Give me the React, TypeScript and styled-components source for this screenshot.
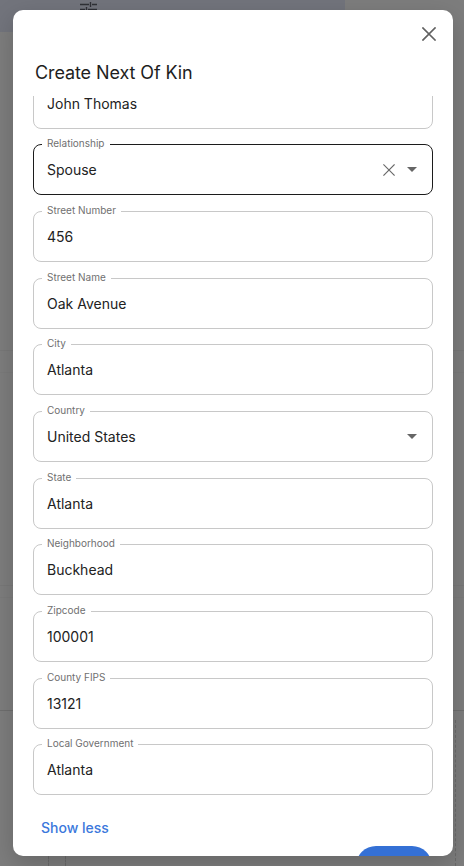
import React from "react";
import styled, { createGlobalStyle } from "styled-components";

const Global = createGlobalStyle`
  html, body { margin: 0; padding: 0; }
  body { font-family: Inter, "Noto Sans", Arial, sans-serif; background: #7d7d7d; }
  * { box-sizing: border-box; }
`;

const Screen = styled.div`
  position: relative;
  width: 464px;
  height: 866px;
  overflow: hidden;
  background: #7d7d7d;
  padding: 10px 11px 0 13px;
`;

const PageBehind = styled.div`
  position: absolute;
  inset: 0;
  display: flex;
  flex-direction: column;
  pointer-events: none;
`;

const TopStrip = styled.div`
  width: 345px;
  height: 32px;
  background: #72747c;
  display: flex;
  align-items: flex-start;
  padding-left: 80px;
  color: #2e2e33;
`;

const FaintRule = styled.div<{ $top: number; $color: string }>`
  position: absolute;
  left: 0;
  right: 0;
  top: ${(p) => p.$top}px;
  height: 1px;
  background: ${(p) => p.$color};
`;

const DashedV = styled.div<{ $left: number; $top: number }>`
  position: absolute;
  left: ${(p) => p.$left}px;
  top: ${(p) => p.$top}px;
  bottom: 0;
  width: 0;
  border-left: 1px dashed #6a6a6a;
`;

const Dialog = styled.div`
  position: relative;
  width: 440px;
  height: 846px;
  background: #fff;
  border-radius: 10px;
  overflow: hidden;
  display: flex;
  flex-direction: column;
  box-shadow: 0 8px 24px rgba(0, 0, 0, 0.18);
`;

const Header = styled.div`
  flex: none;
  height: 86px;
  display: flex;
  flex-direction: column;
  padding: 10px 10px 0 22px;
`;

const CloseRow = styled.div`
  display: flex;
  justify-content: flex-end;
`;

const CloseButton = styled.button`
  width: 28px;
  height: 28px;
  border: none;
  background: transparent;
  padding: 0;
  display: flex;
  align-items: center;
  justify-content: center;
  cursor: pointer;
`;

const Title = styled.h2`
  margin: 12.5px 0 0;
  font-size: 18px;
  line-height: 24px;
  font-weight: 400;
  color: #1e1e1e;
  letter-spacing: -0.1px;
`;

const Body = styled.div`
  flex: 1;
  overflow: hidden;
  padding: 0 20px;
`;

const Stack = styled.div`
  margin-top: -18.33px;
  display: flex;
  flex-direction: column;
  gap: 15.67px;
`;

const Field = styled.div<{ $focused?: boolean }>`
  position: relative;
  height: 51px;
  border: 1px solid ${(p) => (p.$focused ? "#1c1c1c" : "#c8c8c8")};
  border-radius: 8px;
  display: flex;
  align-items: center;
  padding: 0 13px;
`;

const Label = styled.span`
  position: absolute;
  top: -9px;
  left: 8px;
  padding: 0 5px;
  background: #fff;
  font-size: 10px;
  line-height: 14px;
  color: #707070;
`;

const Value = styled.span`
  flex: 1;
  font-size: 14px;
  color: #222;
`;

const Adornments = styled.div`
  display: flex;
  align-items: center;
  gap: 12px;
  margin-right: 2px;
`;

const Footer = styled.div`
  display: flex;
  flex-direction: column;
  padding-top: 24px;
`;

const ShowLess = styled.button`
  align-self: flex-start;
  border: none;
  background: transparent;
  padding: 0 0 0 8px;
  font-family: inherit;
  font-size: 14px;
  line-height: 18px;
  font-weight: 500;
  color: #3b78dc;
  cursor: pointer;
`;

const Actions = styled.div`
  display: flex;
  justify-content: flex-end;
  margin-top: 9px;
  padding-right: 1px;
`;

const PrimaryButton = styled.button`
  width: 76px;
  height: 40px;
  border: none;
  border-radius: 20px;
  background: #3470d5;
`;

const CloseIcon = ({ size, color, width }: { size: number; color: string; width: number }) => (
  <svg width={size} height={size} viewBox="0 0 14 14" fill="none">
    <path d="M1 1L13 13M13 1L1 13" stroke={color} strokeWidth={width} strokeLinecap="square" />
  </svg>
);

const Caret = () => (
  <svg width="10" height="5" viewBox="0 0 10 5">
    <path d="M0 0H10L5 5Z" fill="#666" />
  </svg>
);

const Tune = () => (
  <svg width="17" height="12" viewBox="0 0 17 12" fill="none">
    <path d="M0 4.5H9M12 4.5H17M0 9.5H5M8 9.5H17M10.5 2V7M6.5 7V12" stroke="#2f3036" strokeWidth="1.4" />
  </svg>
);

type F = { label: string; value: string; kind?: "select" | "clearable" };

const fields: F[] = [
  { label: "Name", value: "John Thomas" },
  { label: "Relationship", value: "Spouse", kind: "clearable" },
  { label: "Street Number", value: "456" },
  { label: "Street Name", value: "Oak Avenue" },
  { label: "City", value: "Atlanta" },
  { label: "Country", value: "United States", kind: "select" },
  { label: "State", value: "Atlanta" },
  { label: "Neighborhood", value: "Buckhead" },
  { label: "Zipcode", value: "100001" },
  { label: "County FIPS", value: "13121" },
  { label: "Local Government", value: "Atlanta" },
];

export default function App() {
  return (
    <>
      <Global />
      <Screen>
        <PageBehind>
          <TopStrip>
            <Tune />
          </TopStrip>
          <FaintRule $top={350} $color="#787878" />
          <FaintRule $top={372} $color="#7a7a7a" />
          <FaintRule $top={585} $color="#787878" />
          <FaintRule $top={597} $color="#7a7a7a" />
          <FaintRule $top={710} $color="#6e6e6e" />
          <DashedV $left={48} $top={856} />
          <DashedV $left={65} $top={856} />
          <DashedV $left={455} $top={720} />
        </PageBehind>
        <Dialog>
          <Header>
            <CloseRow>
              <CloseButton aria-label="close">
                <CloseIcon size={14} color="#616161" width={1.7} />
              </CloseButton>
            </CloseRow>
            <Title>Create Next Of Kin</Title>
          </Header>
          <Body>
            <Stack>
              {fields.map((f, i) => (
                <Field key={f.label} $focused={f.kind === "clearable"}>
                  {i > 0 && <Label>{f.label}</Label>}
                  <Value>{f.value}</Value>
                  {f.kind && (
                    <Adornments>
                      {f.kind === "clearable" && <CloseIcon size={12} color="#6a6a6a" width={1.4} />}
                      <Caret />
                    </Adornments>
                  )}
                </Field>
              ))}
            </Stack>
            <Footer>
              <ShowLess>Show less</ShowLess>
              <Actions>
                <PrimaryButton aria-label="Save" />
              </Actions>
            </Footer>
          </Body>
        </Dialog>
      </Screen>
    </>
  );
}
